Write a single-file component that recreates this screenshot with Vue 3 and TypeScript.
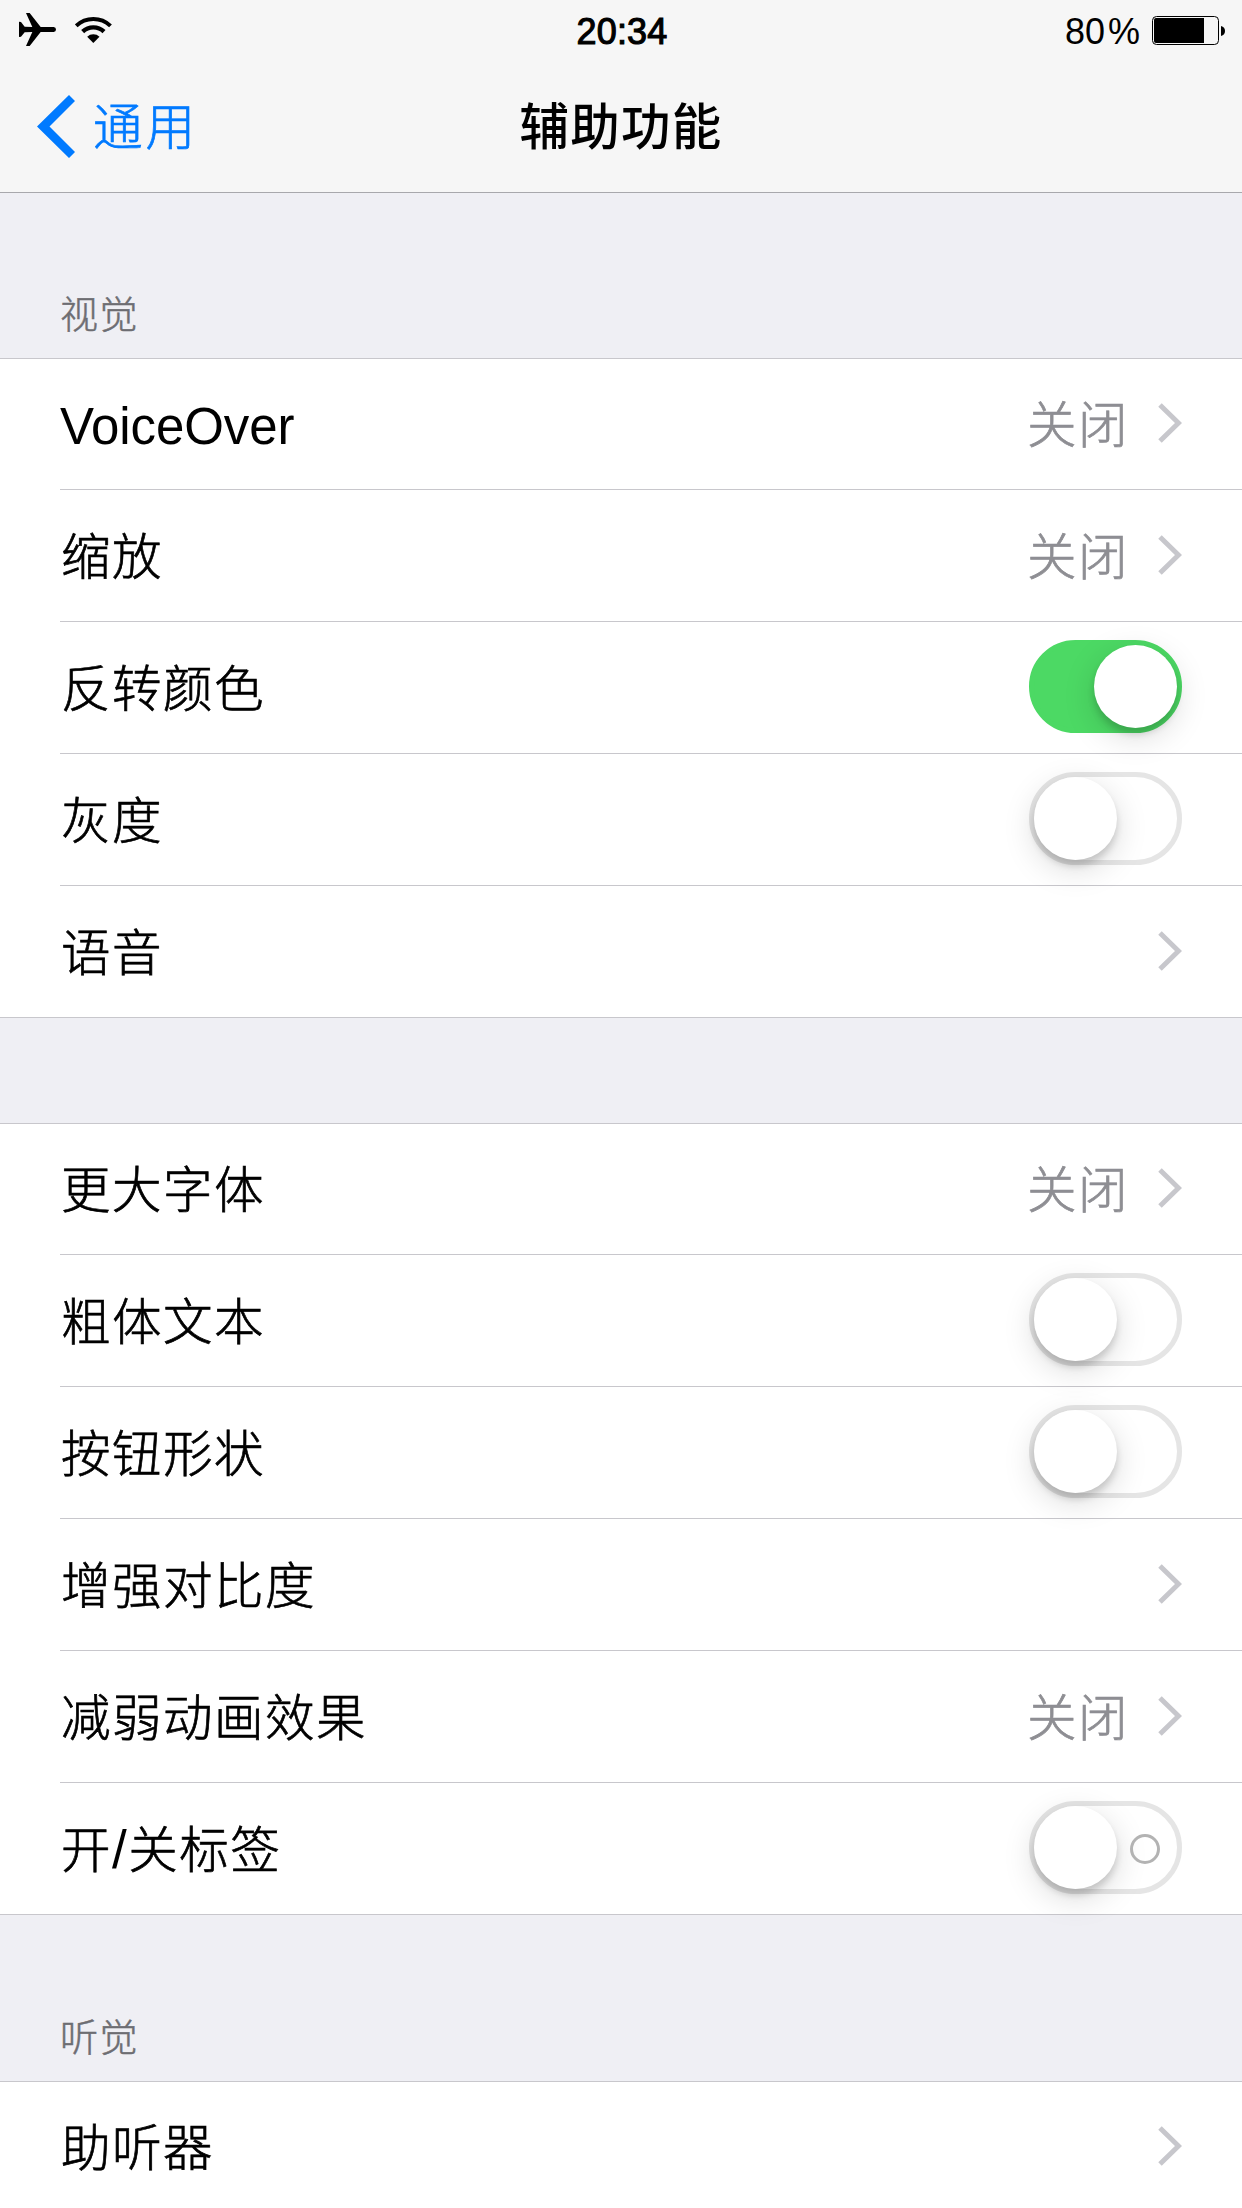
<script setup lang="ts">
interface Row {
  label: string
  latin?: boolean
  value?: string
  toggle?: 'on' | 'off' | 'labelled'
}

interface Section {
  kind: 'titled' | 'plain' | 'later'
  title?: string
  rows: Row[]
}

const sections: Section[] = [
  {
    kind: 'titled',
    title: '视觉',
    rows: [
      { label: 'VoiceOver', latin: true, value: '关闭' },
      { label: '缩放', value: '关闭' },
      { label: '反转颜色', toggle: 'on' },
      { label: '灰度', toggle: 'off' },
      { label: '语音' },
    ],
  },
  {
    kind: 'plain',
    rows: [
      { label: '更大字体', value: '关闭' },
      { label: '粗体文本', toggle: 'off' },
      { label: '按钮形状', toggle: 'off' },
      { label: '增强对比度' },
      { label: '减弱动画效果', value: '关闭' },
      { label: '开/关标签', toggle: 'labelled' },
    ],
  },
  { kind: 'later', title: '听觉', rows: [{ label: '助听器' }] },
]

// The slash gets its own run so that it can be sized apart from the ideographs.
const runs = (label: string): string[] => label.split(/(\/)/)
</script>

<template>
  <div class="screen">
    <header class="header">
      <div class="status">
        <div class="status-left">
          <svg class="plane" width="37" height="33" viewBox="57 39 111 99">
            <path d="M57 65 L63 66 L74 80 L97 81 L78 39 L89 39 L122 81 L161 81 Q168 82 168 88.500 Q168 95 161 96 L122 96 L89 138 L78 138 L97 96 L74 97 L63 110 L57 111 Z" />
          </svg>
          <svg class="wifi" width="37" height="27" viewBox="225 47 111 81">
            <path d="M228.600 76.600 A74 74 0 0 1 331.400 76.600" fill="none" stroke="#000" stroke-width="12" />
            <path d="M248 94 A46.500 46.500 0 0 1 312 94" fill="none" stroke="#000" stroke-width="13" />
            <path d="M280 128 L261.500 109 A27 27 0 0 1 298.500 109 Z" />
          </svg>
        </div>
        <div class="time">20:34</div>
        <div class="status-right">
          <span class="percent">80<i>%</i></span>
          <svg width="74" height="30" viewBox="0 0 74 30">
            <rect x="0.500" y="0.500" width="66" height="28" rx="4" fill="none" stroke="#000" />
            <path d="M4 2 H52 V27 H4 Q2 27 2 25 V4 Q2 2 4 2 Z" />
            <path d="M69 10 Q73 11 73 15 Q73 19 69 20 Z" />
          </svg>
        </div>
      </div>
      <nav class="nav">
        <a class="back">
          <svg width="38" height="63" viewBox="0 0 38 63">
            <path d="M0 31.500 L32 0 L38 6 L12.500 31.500 L38 57 L32 63 Z" fill="#007aff" />
          </svg>
          <span>通用</span>
        </a>
        <h1>辅助功能</h1>
        <div class="nav-end"></div>
      </nav>
    </header>

    <section v-for="(section, i) in sections" :key="i" :class="section.kind">
      <h2 v-if="section.title">{{ section.title }}</h2>
      <ul class="group">
        <li v-for="row in section.rows" :key="row.label" class="row">
          <span class="label" :class="{ latin: row.latin }"><span v-for="(run, n) in runs(row.label)" :key="n" :class="{ slash: run === '/' }">{{ run }}</span></span>
          <span v-if="row.toggle" class="switch" :class="row.toggle">
            <span class="knob"></span>
            <span v-if="row.toggle === 'labelled'" class="ring"></span>
          </span>
          <template v-else>
            <span v-if="row.value" class="value">{{ row.value }}</span>
            <svg class="chevron" width="24" height="40" viewBox="0 0 24 40">
              <path d="M2 2 L20.500 20 L2 38" fill="none" stroke="#c7c7cc" stroke-width="5" />
            </svg>
          </template>
        </li>
      </ul>
    </section>
  </div>
</template>

<style>
body {
  margin: 0;
  overflow: hidden;
}
</style>

<style scoped>
.screen {
  width: 1242px;
  height: 2208px;
  overflow: hidden;
  background: #efeff4;
  color: #000;
  font-family: "Liberation Sans", "Noto Sans CJK SC", sans-serif;
  font-weight: 300;
  font-size: 49.5px;
}

.header {
  height: 192px;
  background: #f6f6f6;
  border-bottom: 1px solid #a8a8ac;
}

.status {
  display: grid;
  grid-template-columns: 1fr auto 1fr;
  height: 60px;
  font-size: 36px;
  line-height: 60px;
}

.status-left {
  display: flex;
  align-items: flex-start;
  gap: 19px;
  padding-left: 19px;
}

.plane {
  margin-top: 13px;
}

.wifi {
  margin-top: 16px;
}

.time {
  padding: 2px 0 0 2px;
  font-weight: 400;
  letter-spacing: 0.2px;
  -webkit-text-stroke: 1.100px #000;
}

.status-right {
  display: flex;
  justify-content: flex-end;
  gap: 12px;
  padding-right: 16px;
}

.status-right svg {
  margin-top: 16px;
}

.percent {
  padding-top: 2px;
}

.percent i {
  margin-left: 3px;
  font-style: normal;
}

.nav {
  display: grid;
  grid-template-columns: 1fr auto 1fr;
  align-items: center;
  height: 132px;
}

.back {
  display: flex;
  align-items: center;
  gap: 18px;
  padding-left: 37px;
  color: #007aff;
}

.back svg {
  margin-top: 1px;
}

.back span {
  margin-top: -6px;
  letter-spacing: 3px;
  -webkit-text-stroke: 0.7px currentColor;
}

h1 {
  margin: -5px 0 0;
  font-size: 49.5px;
  font-weight: 500;
  letter-spacing: 1.3px;
}

h2 {
  box-sizing: border-box;
  height: 165px;
  margin: 0;
  padding: 92px 0 0 60px;
  color: #6d6d72;
  font-size: 38px;
  font-weight: 300;
  letter-spacing: 1.5px;
  line-height: 60px;
  -webkit-text-stroke: 0.5px currentColor;
}

.plain {
  margin-top: 105px;
}

.later h2 {
  height: 166px;
  padding-top: 93px;
}

.group {
  margin: 0;
  padding: 0;
  list-style: none;
  background: #fff;
  border-top: 1px solid #c8c7cc;
  border-bottom: 1px solid #c8c7cc;
}

.row {
  display: flex;
  align-items: center;
  box-sizing: border-box;
  height: 132px;
  margin-left: 60px;
  padding-right: 60px;
  border-bottom: 1px solid #c8c7cc;
}

.row:first-child {
  height: 131px;
}

.row:last-child {
  height: 131px;
  border-bottom: 0;
}

.later .row {
  height: 130px;
}

.label {
  flex: 1;
  padding: 4px 0 0 1px;
  letter-spacing: 1.5px;
  line-height: 76px;
  -webkit-text-stroke: 0.7px currentColor;
}

.label.latin {
  padding: 5px 0 0;
  font-size: 51px;
  letter-spacing: -0.1px;
  -webkit-text-stroke: 0;
}

.slash {
  font-size: 53px;
  -webkit-text-stroke: 0;
}

.value {
  margin-right: 29px;
  padding-top: 4px;
  color: #8e8e93;
  letter-spacing: 1.5px;
  line-height: 76px;
  -webkit-text-stroke: 0.7px currentColor;
}

.chevron {
  display: block;
  margin-top: -2px;
}

.switch {
  position: relative;
  display: flex;
  align-items: center;
  justify-content: space-between;
  box-sizing: border-box;
  width: 153px;
  height: 93px;
  margin-top: -2px;
  padding: 0 17px 0 0;
  border: 5px solid #e5e5e5;
  border-radius: 47px;
}

.switch.on {
  justify-content: flex-end;
  padding: 0;
  border-color: #4cd964;
  background: #4cd964;
}

.knob {
  width: 83px;
  height: 83px;
  border-radius: 50%;
  background: #fff;
  box-shadow: 0 9px 32px rgba(0, 0, 0, 0.15), 0 6px 7px rgba(0, 0, 0, 0.15);
}

.ring {
  box-sizing: border-box;
  width: 30px;
  height: 30px;
  margin-top: 3px;
  border: 3px solid #b3b3b3;
  border-radius: 50%;
}
</style>
